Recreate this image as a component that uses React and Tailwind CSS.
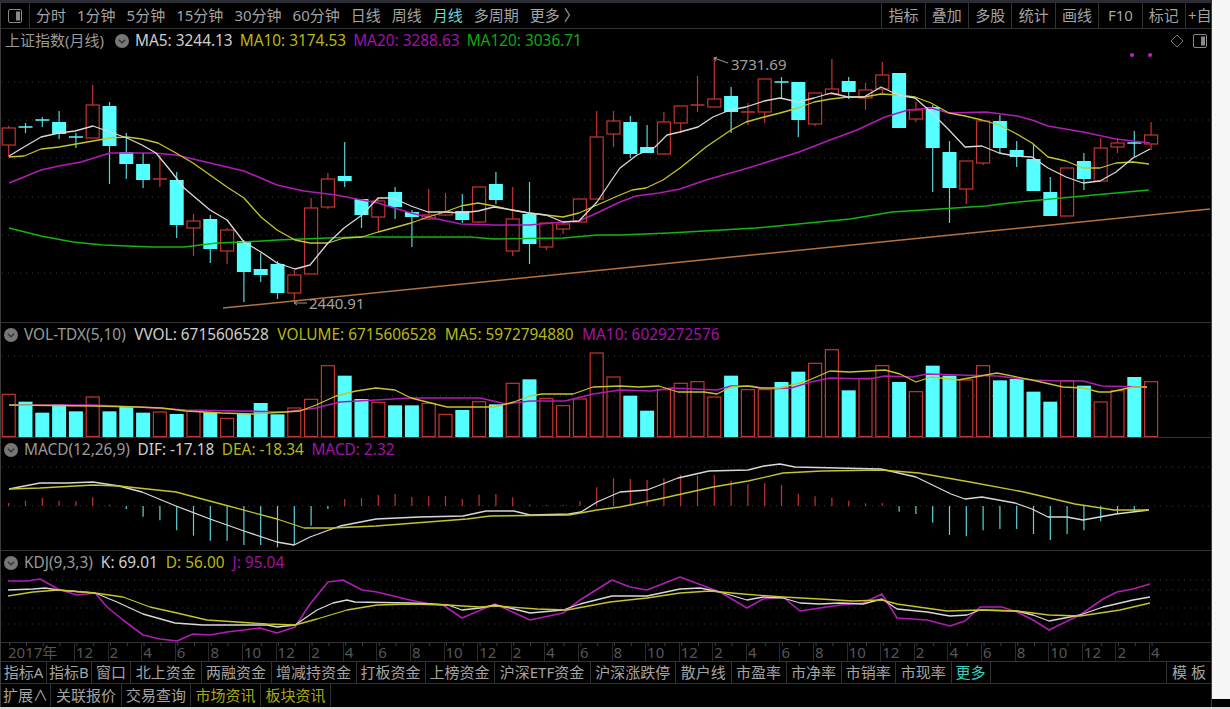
const RED = '#c5352f';
const CYAN = '#55ffff';
const WICK = '#58d4d8';
const barX = (i) => 8.7 + 16.8 * i;

// [up?, body top, body bottom, high, low]
const candles = [
  [1,128,145,126,157],[0,127,127,123,133],[0,120,120,117,127],[0,122,134,111,139],[0,137,137,133,148],
  [1,105,138,85,138],[0,106,146,102,184],[0,152,164,133,179],[0,164,180,153,188],[1,179,179,155,187],
  [0,180,225,172,238],[1,221,228,214,256],[0,219,249,215,263],[1,230,251,228,264],[0,241,272,240,302],
  [0,269,275,253,282],[0,264,293,261,299],[1,275,293,270,302],[1,208,274,198,274],[1,179,207,173,209],
  [0,176,181,142,187],[0,199,215,199,228],[1,201,217,198,231],[0,192,207,187,219],[0,212,217,210,247],
  [1,215,219,189,220],[1,212,215,193,216],[0,211,220,194,223],[1,187,222,187,223],[0,184,200,172,204],
  [1,219,251,187,256],[0,214,244,182,264],[1,223,247,223,250],[1,224,229,223,234],[1,199,222,199,222],
  [1,137,199,111,199],[1,121,134,111,147],[0,122,154,116,158],[0,147,153,125,153],[1,122,154,112,155],
  [1,106,123,106,133],[1,105,105,76,112],[1,99,107,57,107],[0,96,112,87,133],[1,112,112,103,125],
  [1,79,112,79,123],[0,82,82,77,99],[0,82,120,82,137],[1,93,124,93,126],[1,89,94,59,94],
  [0,81,92,77,99],[1,90,98,83,110],[1,75,89,62,93],[0,73,128,73,128],[1,110,119,102,122],
  [0,107,148,105,192],[0,152,188,141,223],[1,161,189,161,204],[1,121,163,120,165],[0,121,148,115,153],
  [0,150,157,141,167],[0,159,191,144,191],[0,192,216,177,216],[1,168,216,168,216],[0,161,179,153,190],
  [1,148,181,138,181],[1,143,147,138,153],[0,143,143,131,157],[1,135,144,122,150],
];

const ma5 = '9,156 24,147 41,137 59,133 75,131 93,126 110,132 127,138 142,145 156,153 170,170 184,188 210,210 227,220 244,242 261,252 277,263 295,269 310,265 328,243 344,228 362,215 378,198 393,198 411,206 428,212 445,212 461,213 478,211 494,207 512,210 529,213 546,215 563,222 579,221 597,202 613,178 620,168 637,155 655,147 667,135 680,132 698,127 713,117 730,110 746,107 764,101 780,98 798,102 814,98 831,93 848,97 864,97 881,87 898,95 915,98 931,112 949,130 965,147 982,146 999,153 1015,156 1032,157 1048,168 1066,177 1083,183 1100,181 1116,172 1133,158 1150,149';
const ma10 = '9,157 24,156 41,149 59,147 93,141 110,138 127,137 142,139 158,143 176,153 193,163 210,175 227,187 244,198 261,217 277,230 295,240 310,243 328,243 344,238 362,237 378,232 393,228 411,223 428,217 445,212 461,206 478,203 494,206 512,210 529,213 546,215 563,217 579,213 597,205 620,195 632,190 646,188 663,180 680,168 690,160 706,147 731,130 746,122 764,117 780,113 798,108 814,102 831,99 848,97 864,97 881,94 898,95 915,97 931,103 949,113 965,116 982,120 999,125 1015,133 1032,143 1048,157 1066,161 1083,168 1100,168 1116,163 1133,162 1149,164';
const ma20 = '9,183 24,177 41,170 59,166 81,162 110,153 127,153 154,153 176,155 210,163 244,171 277,185 304,191 336,195 362,200 378,203 411,213 428,217 461,224 494,225 529,225 563,222 579,221 597,213 620,202 636,196 659,193 680,189 706,180 748,168 799,152 830,140 857,130 885,117 908,110 931,108 949,113 986,112 1017,116 1032,120 1048,126 1083,132 1116,139 1150,143';
const ma120 = '9,228 41,236 73,242 103,245 152,247 184,247 217,243 244,242 277,240 328,238 362,237 470,237 494,239 563,238 597,235 620,235 669,233 756,228 850,219 892,212 986,206 1009,203 1083,196 1149,190';

// [up?, zoomed top]
const vols = [
  [1,226],[0,248],[0,281],[0,256],[0,277],[1,234],[0,277],[0,262],[0,281],[1,279],[0,285],[1,277],[0,279],[1,298],[0,285],[0,252],[0,286],[1,267],[1,241],[1,140],
  [0,170],[0,240],[1,250],[0,259],[0,259],[1,253],[1,286],[0,273],[1,248],[0,256],[1,193],[0,181],[1,238],[1,260],[1,240],[1,102],[1,174],[0,230],[0,275],[1,212],
  [1,193],[1,188],[1,234],[0,170],[1,212],[1,212],[0,189],[0,158],[1,133],[1,92],[0,214],[1,178],[1,140],[0,189],[1,218],[0,140],[0,170],[1,183],[1,140],[0,184],
  [0,180],[0,218],[0,248],[1,185],[0,200],[1,249],[1,215],[0,174],[1,188],
];
const volYellow = '9,406 93,407 138,408 162,409 186,412 221,414 253,415 285,413 300,412 316,406 336,397 356,392 376,389 395,391 411,399 427,403 447,408 494,408 514,403 530,397 542,395 573,395 593,388 620,387 639,388 659,387 678,393 704,393 717,395 731,388 748,387 760,389 780,389 807,382 830,372 850,373 885,371 900,375 916,383 931,378 958,381 997,374 1032,381 1063,388 1083,389 1099,393 1110,393 1133,388 1147,388';
const volMagenta = '9,406 93,406 138,408 186,411 285,413 316,409 340,403 411,399 480,399 506,405 530,402 565,402 593,395 620,391 651,392 671,389 717,391 731,387 752,387 768,390 791,389 811,383 830,379 869,380 885,377 912,378 927,375 958,376 997,377 1032,381 1060,382 1083,382 1102,387 1147,388';

const macdBars = [552,545,537,545,547,535,557,570,593,604,634,650,665,665,678,678,685,678,620,570,540,537,528,525,533,532,531,540,527,525,535,557,558,558,547,505,478,480,483,478,467,470,468,485,495,492,498,525,532,536,545,553,552,578,585,611,648,652,634,630,630,645,663,645,634,607,585,575];
const dif = '9,490 40,484 67,484 93,483 119,487 142,493 176,507 210,520 244,532 277,543 294,546 310,538 340,527 376,520 419,518 463,517 486,512 514,512 530,516 569,515 581,513 597,503 620,493 647,491 678,479 709,472 748,471 764,467 780,465 795,468 881,470 916,478 951,495 965,500 982,498 1015,504 1032,510 1048,518 1067,518 1083,521 1116,515 1149,511';
const dea = '9,490 40,489 93,486 119,487 176,493 221,505 277,520 304,529 332,529 376,527 467,520 490,517 569,516 597,511 620,508 659,500 713,488 748,482 783,474 822,472 881,471 919,474 970,483 1024,493 1075,505 1114,511 1149,511';

const kdjJ = '8,582 28,582 40,580 58,590 77,596 95,594 107,608 123,621 143,636 160,640 177,642 193,635 210,636 227,633 260,629 277,634 295,628 310,605 328,583 343,581 362,591 377,593 410,601 430,605 443,606 462,619 495,605 530,621 563,614 580,601 612,581 630,588 647,591 680,578 720,593 747,609 763,600 783,598 800,612 820,609 840,606 863,604 882,595 897,619 927,621 950,627 965,622 980,608 1002,608 1017,613 1033,621 1049,631 1080,616 1103,600 1117,593 1133,590 1150,585';
const kdjK = '8,591 33,590 45,589 58,591 95,594 117,603 143,615 175,624 203,626 267,626 277,628 295,626 317,611 333,604 347,601 355,603 410,604 433,605 448,606 462,611 480,609 495,606 510,609 530,614 563,611 580,605 612,597 647,597 680,590 700,589 720,593 747,601 763,598 783,599 800,604 820,605 840,604 863,605 882,600 897,610 927,613 950,617 967,616 980,611 1017,612 1033,616 1049,622 1080,616 1103,608 1133,601 1150,598';
const kdjD = '8,597 33,593 58,591 95,594 123,598 150,608 177,614 207,621 267,625 295,626 317,620 347,611 377,606 410,605 448,606 463,607 480,608 497,607 537,610 567,611 610,603 647,599 680,594 710,592 743,595 783,598 820,600 853,602 882,601 897,605 947,612 980,611 1017,612 1049,616 1080,617 1120,611 1150,604';

const toolbarItems = [
  ['分时', 'text-[#a3a3a3]'], ['1分钟', 'text-[#a3a3a3]'], ['5分钟', 'text-[#a3a3a3]'], ['15分钟', 'text-[#a3a3a3]'],
  ['30分钟', 'text-[#a3a3a3]'], ['60分钟', 'text-[#a3a3a3]'], ['日线', 'text-[#a3a3a3]'], ['周线', 'text-[#a3a3a3]'],
  ['月线', 'text-[#62d8d8]'], ['多周期', 'text-[#a3a3a3]'], ['更多 〉', 'text-[#a3a3a3]'],
];
const axisLabels = ['12','2','4','6','8','10','12','2','4','6','8','10','12','2','4','6','8','10','12','2','4','6','8','10','12','2','4','6','8','10','12','2','4'];
const tabs = [
  ['指标A', 'w-[46px]'], ['指标B', 'w-[45px]'], ['窗口', 'w-[39px]'], ['北上资金', 'w-[70.5px]'], ['两融资金', 'w-[70px]'],
  ['增减持资金', 'w-[85px]'], ['打板资金', 'w-[69px]'], ['上榜资金', 'w-[69px]'], ['沪深ETF资金', 'w-[96px]'], ['沪深涨跌停', 'w-[85.5px]'],
  ['散户线', 'w-[55.5px]'], ['市盈率', 'w-[55px]'], ['市净率', 'w-[55px]'], ['市销率', 'w-[54.5px]'], ['市现率', 'w-[55.5px]'],
];
const tabs2 = [
  ['扩展∧', 'w-[50px]', 'text-[#a3a3a3]'], ['关联报价', 'w-[71px]', 'text-[#a3a3a3]'], ['交易查询', 'w-[69px]', 'text-[#a3a3a3]'],
  ['市场资讯', 'w-[70px]', 'text-[#a8a814]'], ['板块资讯', 'w-[70px]', 'text-[#a8a814]'],
];

const Chevron = () => (
  <svg width="14" height="14" viewBox="0 0 14 14" className="shrink-0">
    <circle cx="7" cy="7" r="7" fill="#777" />
    <path d="M3.8 5.8 7 8.8l3.2-3" fill="none" stroke="#333" strokeWidth="1.4" />
  </svg>
);

const PanelIcon = () => (
  <svg width="16" height="16" viewBox="0 0 16 16" className="shrink-0">
    <rect x="1.5" y="1.5" width="13" height="13" rx="1.5" fill="none" stroke="#8a8a8a" />
    <rect x="9" y="3.5" width="4" height="9" fill="#8a8a8a" />
  </svg>
);

const Grid = ({ ys }) => ys.map((y) => (
  <line key={y} x1="2" x2="1209" y1={y} y2={y} stroke="#3a3a3a" strokeDasharray="1 5" />
));

const Line = ({ points, color, width = 1.3 }) => (
  <polyline points={points} fill="none" stroke={color} strokeWidth={width} strokeLinejoin="round" />
);

// svg uses page coordinates, so data reads the same as the picture
const Plot = ({ top, bottom, children }) => (
  <svg width="1210" height={bottom - top} viewBox={`1 ${top} 1210 ${bottom - top}`} className="block overflow-hidden">
    {children}
  </svg>
);

const Candle = ({ c, i }) => {
  const [up, bt, bb, high, low] = c;
  const x = barX(i);
  const color = up ? RED : WICK;
  if (bt === bb) {
    return (
      <g>
        <line x1={x} x2={x} y1={high} y2={low} stroke={color} strokeWidth="1.2" />
        <line x1={x - 7} x2={x + 7} y1={bt} y2={bt} stroke={up ? RED : CYAN} strokeWidth="1.5" />
      </g>
    );
  }
  return (
    <g>
      <line x1={x} x2={x} y1={high} y2={bt} stroke={color} strokeWidth="1.2" />
      <line x1={x} x2={x} y1={bb} y2={low} stroke={color} strokeWidth="1.2" />
      {up
        ? <rect x={x - 6.5} y={bt} width="13" height={bb - bt} fill="none" stroke={RED} strokeWidth="1.2" />
        : <rect x={x - 7} y={bt} width="14" height={bb - bt} fill={CYAN} />}
    </g>
  );
};

const Header = ({ gap, children }) => (
  <div className={`h-[23px] flex items-center ${gap} text-[15.4px] whitespace-nowrap`}>{children}</div>
);

export default function App() {
  return (
    <div className="w-[1230px] h-[709px] flex flex-col overflow-hidden bg-[#d8d8d8] font-['Noto_Sans','Noto_Sans_CJK_SC',sans-serif] text-[15px] leading-none">
      <div className="h-[707px] flex bg-black">
        <div className="w-[1212px] h-[707px] flex flex-col border-l border-r border-[#3c3c3c] box-border">
          <div className="h-[3px] bg-[#2c2c34] -mx-px" />

          <div className="h-[26px] flex items-stretch border-b border-[#333] overflow-hidden">
            <div className="w-[29px] flex items-center justify-center border-r border-[#333]">
              <PanelIcon />
            </div>
            <div className="flex items-center gap-[11px] pl-[6px]">
              {toolbarItems.map(([label, color]) => (
                <span key={label} className={color}>{label}</span>
              ))}
            </div>
            <div className="ml-auto flex items-stretch text-[#a3a3a3]">
              {['指标', '叠加', '多股', '统计', '画线', 'F10', '标记'].map((label) => (
                <div key={label} className="w-[43.4px] flex items-center justify-center border-l border-[#333]">{label}</div>
              ))}
              <div className="w-[26px] flex items-center pl-[2px] border-l border-[#333] overflow-hidden whitespace-nowrap">+自</div>
            </div>
          </div>

          <div className="h-[294px] border-b border-[#333]">
            <div className="h-[23px] flex items-center whitespace-nowrap text-[15.4px] pl-[4px] pr-[3px]">
              <span className="text-[15px] text-[#999] w-[110px]">上证指数(月线)</span>
              <Chevron />
              <div className="flex items-center gap-[7px] pl-[6px]">
                <span className="text-[#cfcfcf]">MA5: 3244.13</span>
                <span className="text-[#b8b814]">MA10: 3174.53</span>
                <span className="text-[#a312a8]">MA20: 3288.63</span>
                <span className="text-[#12a812]">MA120: 3036.71</span>
              </div>
              <div className="ml-auto flex items-center gap-[8px]">
                <svg width="14" height="14" viewBox="0 0 14 14">
                  <path d="M7 1 13 7 7 13 1 7Z" fill="none" stroke="#777" />
                </svg>
                <PanelIcon />
              </div>
            </div>
            <Plot top={52} bottom={323}>
              <Grid ys={[82, 120, 158, 197, 235, 273]} />
              <path d="M1132 55h.1M1150 55h.1" stroke="#c020c0" strokeWidth="4" strokeLinecap="round" />
              {candles.map((c, i) => <Candle key={i} c={c} i={i} />)}
              <line x1="223" y1="308" x2="1210" y2="209" stroke="#b5723c" strokeWidth="1.5" />
              <Line points={ma120} color="#14b414" width="1.5" />
              <Line points={ma20} color="#b01cb4" width="1.6" />
              <Line points={ma10} color="#c4c42c" />
              <Line points={ma5} color="#d8d8d8" />
              <path d="M714 58 728 63M714 58l3-1M714 58l2 3" fill="none" stroke="#999" />
              <text x="731" y="70" fontSize="15" fill="#a0a0a0">3731.69</text>
              <path d="M294 303h13M294 303l3-2M294 303l3 2" fill="none" stroke="#999" />
              <text x="309" y="309" fontSize="15" fill="#a0a0a0">2440.91</text>
            </Plot>
          </div>

          <div className="h-[115px] border-b border-[#333] pl-[3px]">
            <Header gap="gap-[8.5px]">
              <Chevron />
              <span className="text-[#999] -ml-[2.5px]">VOL-TDX(5,10)</span>
              <span className="text-[#cfcfcf]">VVOL: 6715606528</span>
              <span className="text-[#b8b814]">VOLUME: 6715606528</span>
              <span className="text-[#b8b814]">MA5: 5972794880</span>
              <span className="text-[#a312a8]">MA10: 6029272576</span>
            </Header>
            <div className="-ml-[3px]">
              <Plot top={347} bottom={438}>
                <Grid ys={[357, 397]} />
                {vols.map(([up, z], i) => {
                  const y = 320 + z / 3;
                  return up
                    ? <rect key={i} x={barX(i) - 6.5} y={y} width="13" height={437.5 - y} fill="none" stroke={RED} strokeWidth="1.2" />
                    : <rect key={i} x={barX(i) - 7} y={y} width="14" height={438 - y} fill={CYAN} />;
                })}
                <Line points={volMagenta} color="#b01cb4" width="1.6" />
                <Line points={volYellow} color="#c4c42c" />
              </Plot>
            </div>
          </div>

          <div className="h-[113px] border-b border-[#333] pl-[3px]">
            <Header gap="gap-[7.5px]">
              <Chevron />
              <span className="text-[#999] -ml-[1.5px]">MACD(12,26,9)</span>
              <span className="text-[#cfcfcf]">DIF: -17.18</span>
              <span className="text-[#b8b814]">DEA: -18.34</span>
              <span className="text-[#a312a8]">MACD: 2.32</span>
            </Header>
            <div className="-ml-[3px]">
              <Plot top={462} bottom={551}>
                <Grid ys={[468, 507]} />
                {macdBars.map((z, i) => (
                  <line key={i} x1={barX(i)} x2={barX(i)} y1="507" y2={320 + z / 3} stroke={z < 560 ? RED : WICK} strokeWidth="1.2" />
                ))}
                <Line points={dif} color="#d8d8d8" />
                <Line points={dea} color="#c4c42c" />
              </Plot>
            </div>
          </div>

          <div className="h-[92px] border-b border-[#333] pl-[3px]">
            <Header gap="gap-[8px]">
              <Chevron />
              <span className="text-[#999] -ml-[2px]">KDJ(9,3,3)</span>
              <span className="text-[#cfcfcf]">K: 69.01</span>
              <span className="text-[#b8b814]">D: 56.00</span>
              <span className="text-[#a312a8]">J: 95.04</span>
            </Header>
            <div className="-ml-[3px]">
              <Plot top={575} bottom={643}>
                <Grid ys={[581, 591, 609, 625]} />
                <Line points={kdjJ} color="#b01cb4" width="1.6" />
                <Line points={kdjK} color="#d8d8d8" />
                <Line points={kdjD} color="#c4c42c" />
              </Plot>
            </div>
          </div>

          <div className="relative h-[19px] flex items-stretch border-b border-[#333] text-[#565656] overflow-hidden">
            <div className="w-[73px] flex items-center pl-[7px]">2017年</div>
            {axisLabels.map((label, i) => (
              <div key={i} className="w-[33.6px] shrink-0 flex items-center pl-[1px] border-l border-[#2a2a2a]">{label}</div>
            ))}
            <svg width="1210" height="3" className="absolute left-0 top-0">
              {candles.map((c, i) => <line key={i} x1={barX(i)} x2={barX(i)} y1="0" y2="3" stroke="#3a3a3a" />)}
            </svg>
          </div>

          <div className="h-[22px] flex items-stretch border-b border-[#333] text-[#a3a3a3]">
            {tabs.map(([label, width]) => (
              <div key={label} className={`${width} flex items-center justify-center border-r border-[#333] whitespace-nowrap`}>{label}</div>
            ))}
            <div className="w-[39px] flex items-center justify-center border-r border-[#333] text-[#35cfc4]">更多</div>
            <div className="flex-1" />
            <div className="w-[45px] flex items-center justify-center border-l border-[#333]">模 板</div>
          </div>

          <div className="h-[22px] flex items-stretch text-[#a3a3a3]">
            {tabs2.map(([label, width, color]) => (
              <div key={label} className={`${width} ${color} flex items-center justify-center border-r border-[#333] whitespace-nowrap`}>{label}</div>
            ))}
          </div>
        </div>

        <div className="flex-1 h-[699px] bg-[#f6f6f6]" />
      </div>
      <div className="h-[2px] bg-[#d8d8d8]" />
    </div>
  );
}
